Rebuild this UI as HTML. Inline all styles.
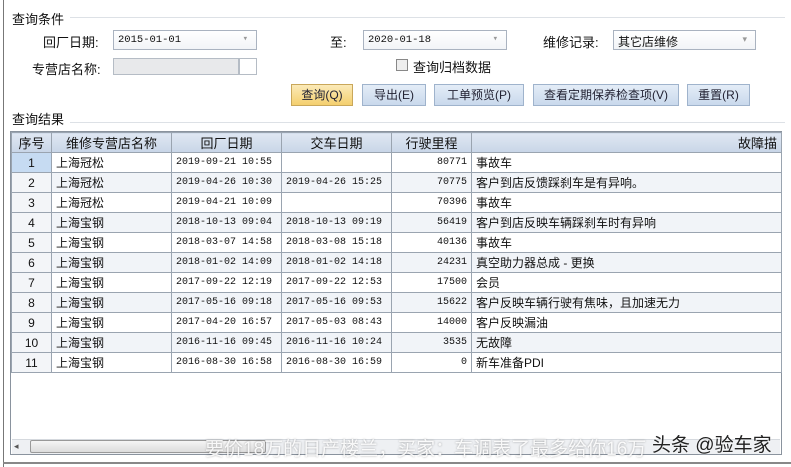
<!DOCTYPE html>
<html><head><meta charset="utf-8"><style>
*{box-sizing:border-box;margin:0;padding:0}
body{width:791px;height:467px;overflow:hidden;background:#fff;font-family:"Liberation Sans","Noto Sans CJK SC",sans-serif;font-size:12px;color:#111;position:relative}
.a{position:absolute;white-space:nowrap}
.cb{position:absolute;height:20px;border:1px solid #aab3c0;background:linear-gradient(#fff,#f2f4f7);font-size:10.5px;padding:3px 4px;font-family:"Liberation Mono","Noto Sans CJK SC",monospace}
.cb:after{content:"▾";position:absolute;right:8px;top:3px;color:#999;font-size:9px}
.btn{position:absolute;top:84px;height:22px;border:1px solid #9fb3cc;background:linear-gradient(#e4edf7,#c9d9ec);text-align:center;line-height:20px;font-size:12px;color:#223}
table{position:absolute;left:11px;top:132px;border-collapse:collapse;width:771px;table-layout:fixed}
td,th{border:1px solid #9aa4b0;height:20px;font-weight:normal;padding:0 4px;white-space:nowrap;overflow:hidden;font-size:12px}
th{background:linear-gradient(#dfe7f2,#c8d5e7);height:20px;font-size:13px}
td.m{font-family:"Liberation Mono",monospace;font-size:10px;padding:0 4px}
tr:nth-child(odd) td{background:#f1f4f8}
td.n{text-align:center;background:#f3f5f8!important}
</style></head><body>
<div class="a" style="left:3px;top:0;width:1px;height:467px;background:#777"></div>
<div class="a" style="left:3px;top:462px;width:788px;height:2px;background:#888"></div>
<div class="a" style="left:12px;top:9px;font-size:13px">查询条件</div>
<div class="a" style="left:70px;top:17px;width:715px;height:1px;background:#dde1e6"></div>
<div class="a" style="left:43px;top:32px;font-size:13px">回厂日期:</div>
<div class="cb" style="left:113px;top:30px;width:144px">2015-01-01</div>
<div class="a" style="left:330px;top:32px;font-size:13px">至:</div>
<div class="cb" style="left:363px;top:30px;width:144px">2020-01-18</div>
<div class="a" style="left:543px;top:32px;font-size:13px">维修记录:</div>
<div class="cb" style="left:613px;top:30px;width:143px;font-family:'Liberation Sans','Noto Sans CJK SC',sans-serif;font-size:12px;padding:2px 4px">其它店维修</div>
<div class="a" style="left:32px;top:59px;font-size:13px">专营店名称:</div>
<div class="a" style="left:113px;top:58px;width:126px;height:17px;border:1px solid #b5bcc5;background:#e8e9eb"></div>
<div class="a" style="left:239px;top:58px;width:18px;height:17px;border:1px solid #b5bcc5;background:#fff"></div>
<div class="a" style="left:396px;top:59px;width:12px;height:12px;border:1px solid #888;background:#eee"></div>
<div class="a" style="left:413px;top:57px;font-size:13px">查询归档数据</div>
<div class="btn" style="left:291px;width:62px;background:linear-gradient(#fbeab8,#f4cf6e);border-color:#c9a75a">查询(Q)</div>
<div class="btn" style="left:362px;width:64px">导出(E)</div>
<div class="btn" style="left:434px;width:90px">工单预览(P)</div>
<div class="btn" style="left:533px;width:146px">查看定期保养检查项(V)</div>
<div class="btn" style="left:687px;width:63px">重置(R)</div>
<div class="a" style="left:12px;top:109px;font-size:13px">查询结果</div>
<div class="a" style="left:70px;top:122px;width:715px;height:1px;background:#dde1e6"></div>
<div class="a" style="left:10px;top:131px;width:772px;height:324px;border:1px solid #8a939e"></div>
<table>
<colgroup><col style="width:40px"><col style="width:120px"><col style="width:110px"><col style="width:110px"><col style="width:80px"><col></colgroup>
<tr><th>序号</th><th>维修专营店名称</th><th>回厂日期</th><th>交车日期</th><th>行驶里程</th><th style="text-align:right">故障描</th></tr>
<tr><td class="n" style="background:#c6dbf2!important">1</td><td>上海冠松</td><td class="m">2019-09-21 10:55</td><td class="m"></td><td class="m" style="text-align:right">80771</td><td>事故车</td></tr>
<tr><td class="n">2</td><td>上海冠松</td><td class="m">2019-04-26 10:30</td><td class="m">2019-04-26 15:25</td><td class="m" style="text-align:right">70775</td><td>客户到店反馈踩刹车是有异响。</td></tr>
<tr><td class="n">3</td><td>上海冠松</td><td class="m">2019-04-21 10:09</td><td class="m"></td><td class="m" style="text-align:right">70396</td><td>事故车</td></tr>
<tr><td class="n">4</td><td>上海宝钢</td><td class="m">2018-10-13 09:04</td><td class="m">2018-10-13 09:19</td><td class="m" style="text-align:right">56419</td><td>客户到店反映车辆踩刹车时有异响</td></tr>
<tr><td class="n">5</td><td>上海宝钢</td><td class="m">2018-03-07 14:58</td><td class="m">2018-03-08 15:18</td><td class="m" style="text-align:right">40136</td><td>事故车</td></tr>
<tr><td class="n">6</td><td>上海宝钢</td><td class="m">2018-01-02 14:09</td><td class="m">2018-01-02 14:18</td><td class="m" style="text-align:right">24231</td><td>真空助力器总成 - 更换</td></tr>
<tr><td class="n">7</td><td>上海宝钢</td><td class="m">2017-09-22 12:19</td><td class="m">2017-09-22 12:53</td><td class="m" style="text-align:right">17500</td><td>会员</td></tr>
<tr><td class="n">8</td><td>上海宝钢</td><td class="m">2017-05-16 09:18</td><td class="m">2017-05-16 09:53</td><td class="m" style="text-align:right">15622</td><td>客户反映车辆行驶有焦味，且加速无力</td></tr>
<tr><td class="n">9</td><td>上海宝钢</td><td class="m">2017-04-20 16:57</td><td class="m">2017-05-03 08:43</td><td class="m" style="text-align:right">14000</td><td>客户反映漏油</td></tr>
<tr><td class="n">10</td><td>上海宝钢</td><td class="m">2016-11-16 09:45</td><td class="m">2016-11-16 10:24</td><td class="m" style="text-align:right">3535</td><td>无故障</td></tr>
<tr><td class="n">11</td><td>上海宝钢</td><td class="m">2016-08-30 16:58</td><td class="m">2016-08-30 16:59</td><td class="m" style="text-align:right">0</td><td>新车准备PDI</td></tr>
</table>
<div class="a" style="left:12px;top:439px;width:768px;height:15px;background:#eef0f3;border-top:1px solid #d5d9de"></div>
<div class="a" style="left:14px;top:441px;font-size:9px;color:#555">◂</div>
<div class="a" style="left:30px;top:440px;width:236px;height:13px;border:1px solid #999;border-radius:2px;background:linear-gradient(#f5f5f5,#dcdcdc)"></div>
<div class="a" style="left:205px;top:434px;font-size:19px;color:rgba(255,255,255,0.9);text-shadow:0 0 2px rgba(0,0,0,0.35)">要价18万的日产楼兰，买家：车调表了最多给你16万</div>
<div class="a" style="left:652px;top:430px;font-size:19px;color:#222;text-shadow:0 0 2px #fff">头条 @验车家</div>
</body></html>
